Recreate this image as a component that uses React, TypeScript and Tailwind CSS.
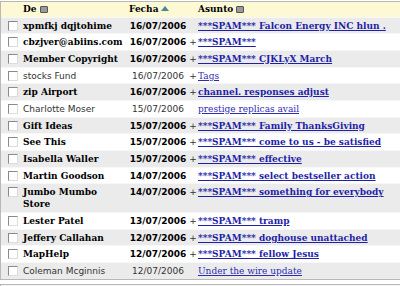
import React from 'react';

type Row = {
  from: string;
  date: string;
  plus: boolean;
  subject: string;
  unread: boolean;
};

const rows: Row[] = [
  { from: 'xpmfkj dqjtohime', date: '16/07/2006', plus: false, subject: '***SPAM*** Falcon Energy INC hlun .', unread: true },
  { from: 'cbzjver@abiins.com', date: '16/07/2006', plus: true, subject: '***SPAM***', unread: true },
  { from: 'Member Copyright', date: '16/07/2006', plus: true, subject: '***SPAM*** CJKLyX March', unread: true },
  { from: 'stocks Fund', date: '16/07/2006', plus: true, subject: 'Tags', unread: false },
  { from: 'zip Airport', date: '16/07/2006', plus: true, subject: 'channel. responses adjust', unread: true },
  { from: 'Charlotte Moser', date: '15/07/2006', plus: false, subject: 'prestige replicas avail', unread: false },
  { from: 'Gift Ideas', date: '15/07/2006', plus: true, subject: '***SPAM*** Family ThanksGiving', unread: true },
  { from: 'See This', date: '15/07/2006', plus: true, subject: '***SPAM*** come to us - be satisfied', unread: true },
  { from: 'Isabella Waller', date: '15/07/2006', plus: true, subject: '***SPAM*** effective', unread: true },
  { from: 'Martin Goodson', date: '14/07/2006', plus: false, subject: '***SPAM*** select bestseller action', unread: true },
  { from: 'Jumbo Mumbo Store', date: '14/07/2006', plus: true, subject: '***SPAM*** something for everybody', unread: true },
  { from: 'Lester Patel', date: '13/07/2006', plus: true, subject: '***SPAM*** tramp', unread: true },
  { from: 'Jeffery Callahan', date: '12/07/2006', plus: true, subject: '***SPAM*** doghouse unattached', unread: true },
  { from: 'MapHelp', date: '12/07/2006', plus: true, subject: '***SPAM*** fellow Jesus', unread: true },
  { from: 'Coleman Mcginnis', date: '12/07/2006', plus: false, subject: 'Under the wire update', unread: false },
];

const serif = "font-['DejaVu_Serif',serif]";
const sans = "font-['DejaVu_Sans',sans-serif]";

function Box() {
  return (
    <span className="inline-block w-[8px] h-[7px] ml-[3px] align-[-1px] rounded-[1px] border border-[#555] bg-[#9a9a9a]" />
  );
}

function Check() {
  return (
    <span className="block w-[10px] h-[10px] border-t border-l border-[#8a8a8a] border-r border-b border-r-[#dcdcdc] border-b-[#dcdcdc] bg-white" />
  );
}

export default function App() {
  return (
    <div className="w-[400px] h-[286px] overflow-hidden bg-white">
      <div className="w-[430px] border-t border-l border-b border-[#b8b8b8] mt-[1px]">
        <table className="table-fixed w-[430px] border-collapse text-[9px] leading-[12px]">
          <colgroup>
            <col className="w-[20px]" />
            <col className="w-[107px]" />
            <col className="w-[60px]" />
            <col className="w-[10px]" />
            <col />
          </colgroup>
          <thead>
            <tr className={`bg-[#fcf9d4] ${serif} font-bold text-black h-[15px]`}>
              <th />
              <th className="text-left px-[2px]">
                De
                <Box />
              </th>
              <th className="text-left px-[1px]">
                Fecha
                <span className="inline-block ml-[3px] align-[1px] w-0 h-0 border-l-[4px] border-r-[4px] border-b-[5px] border-l-transparent border-r-transparent border-b-[#4b8797]" />
              </th>
              <th />
              <th className="text-left px-0">
                Asunto
                <Box />
              </th>
            </tr>
          </thead>
          <tbody>
            {rows.map((r, i) => (
              <tr
                key={i}
                className={`${i % 2 === 0 ? 'bg-[#ebebeb]' : 'bg-white'} border-t border-[#f7f7f7]`}
              >
                <td className="pt-[3px] pb-[1.7px] pl-[7px] align-top">
                  <Check />
                </td>
                <td
                  className={`pt-[2px] pb-[1.7px] px-[2px] align-top ${
                    r.unread ? `${serif} font-bold text-black` : `${sans} text-[#333]`
                  }`}
                >
                  {r.from}
                </td>
                <td
                  className={`pt-[2px] pb-[1.7px] text-center align-top ${
                    r.unread ? `${sans} font-bold text-black` : `${sans} text-[#333]`
                  }`}
                >
                  {r.date}
                </td>
                <td className={`pt-[2px] pb-[1.7px] align-top text-center ${sans} text-[#333]`}>
                  {r.plus ? '+' : ''}
                </td>
                <td className="pt-[2px] pb-[1.7px] align-top whitespace-nowrap overflow-hidden">
                  <a
                    href="#"
                    className={`${serif} underline ${
                      r.unread ? 'font-bold text-[#1f1fa8]' : 'text-[#2c2cb4]'
                    }`}
                  >
                    {r.subject}
                  </a>
                </td>
              </tr>
            ))}
          </tbody>
        </table>
      </div>
      <div className="mt-[4px] h-[10px] border-t border-l border-[#b8b8b8] bg-[#f4f4f4]" />
    </div>
  );
}
